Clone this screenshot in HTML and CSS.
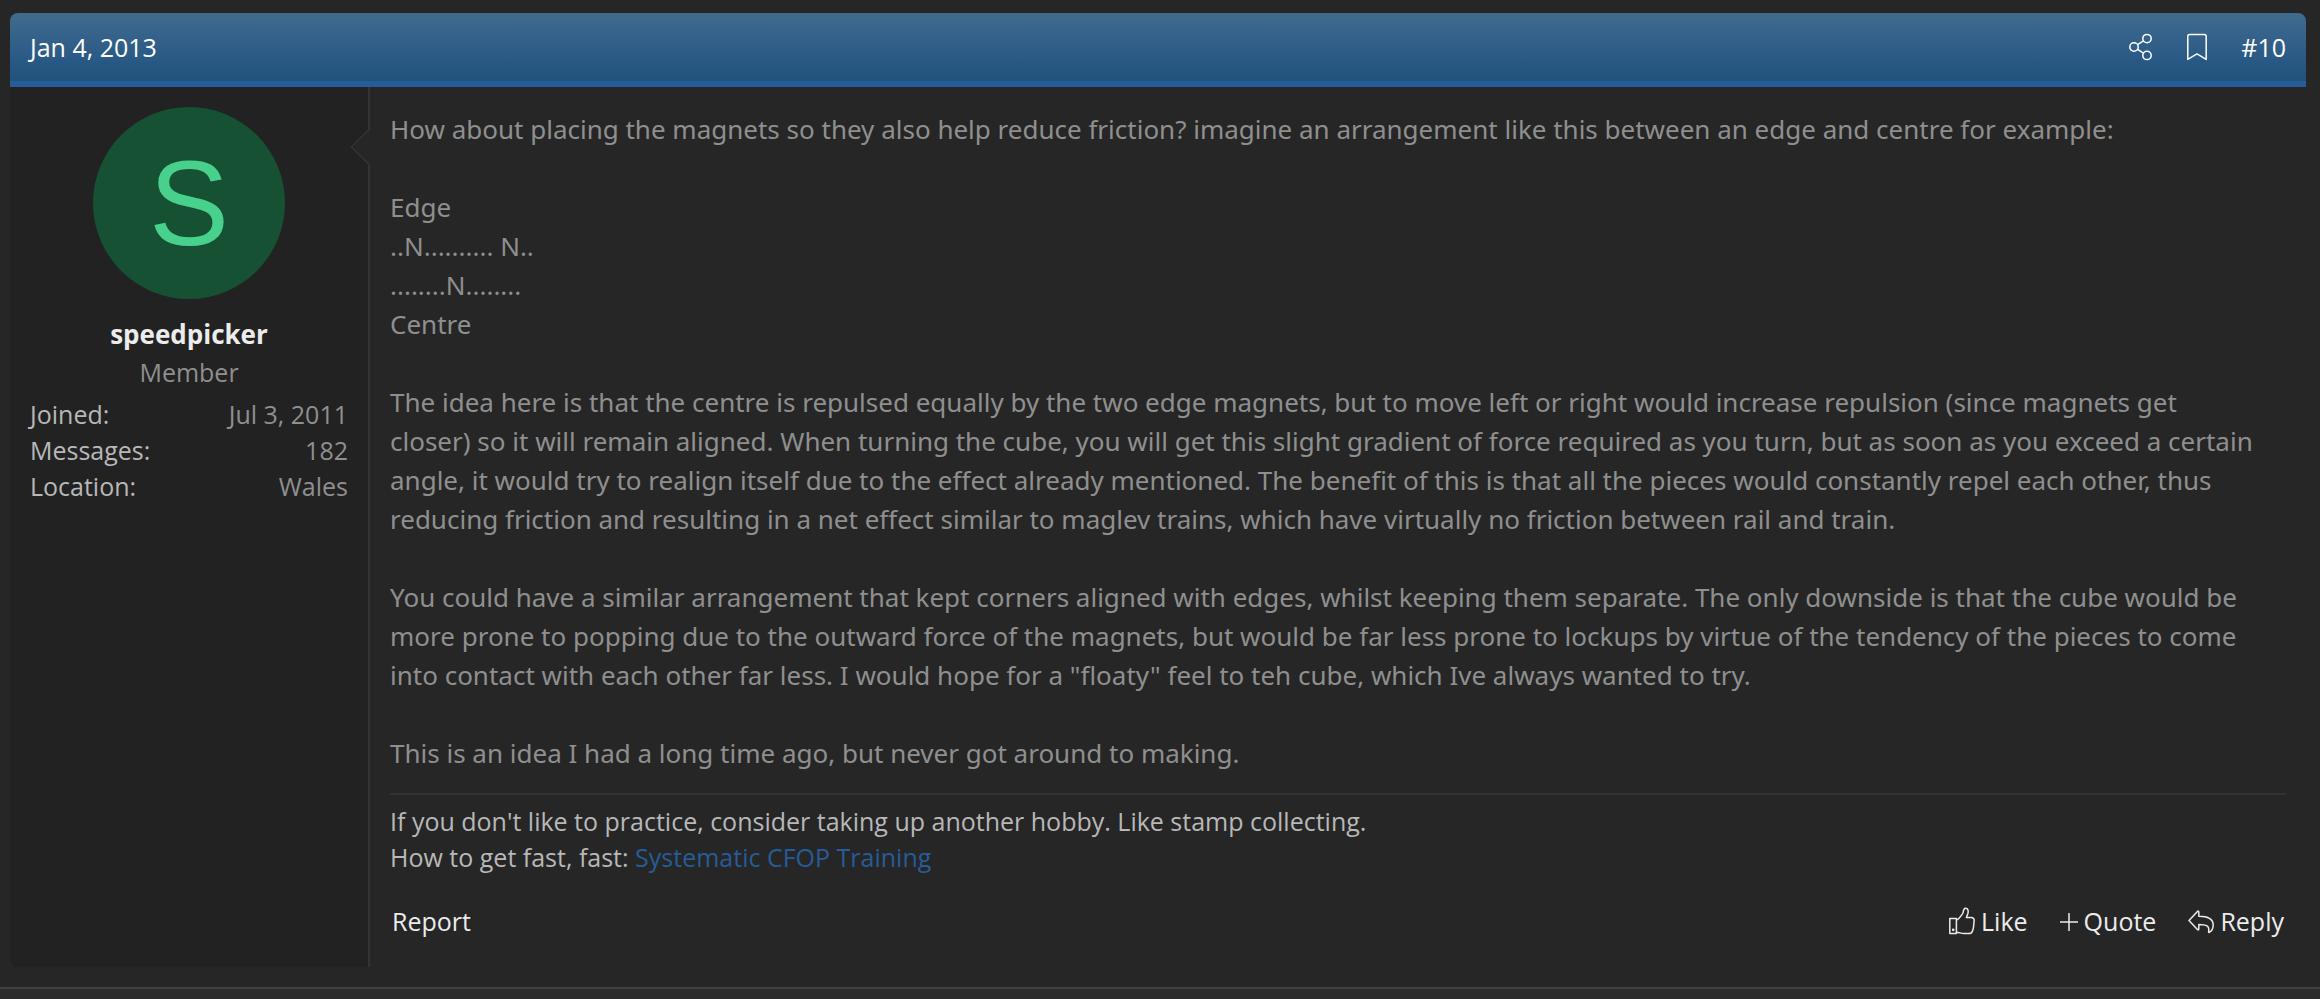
FILE: index.html
```html
<!DOCTYPE html>
<html lang="en">
<head>
<meta charset="utf-8">
<title>Thread – post #10</title>
<link rel="stylesheet" href="styles.css">
</head>
<body>
<main class="block">
  <article class="message">
    <header class="message-header">
      <a class="header-link" href="#post-10"><time datetime="2013-01-04">Jan 4, 2013</time></a>
      <div class="header-tools">
        <button class="icon-button" type="button" aria-label="Share">
          <svg class="icon icon-share" viewBox="0 0 24 28"><circle cx="5" cy="14" r="4.2"/><circle cx="18" cy="5.6" r="4.2"/><circle cx="18" cy="22.4" r="4.2"/><path d="M8.6 11.7l5.8-3.8M8.6 16.3l5.8 3.8"/></svg>
        </button>
        <button class="icon-button" type="button" aria-label="Add bookmark">
          <svg class="icon icon-bookmark" viewBox="0 0 20 28"><path d="M.8 26.4V3.4Q.8 1.6 2.6 1.6H17.4Q19.2 1.6 19.2 3.4V26.4L10 20.9Z"/></svg>
        </button>
        <a class="header-link" href="#post-10">#10</a>
      </div>
    </header>
    <div class="message-body">
      <section class="user">
        <a class="avatar" href="#speedpicker" aria-label="speedpicker's profile"><span>S</span></a>
        <h4 class="user-name"><a href="#speedpicker">speedpicker</a></h4>
        <h5 class="user-title">Member</h5>
        <dl class="user-stats">
          <div class="pair"><dt>Joined:</dt><dd>Jul 3, 2011</dd></div>
          <div class="pair"><dt>Messages:</dt><dd>182</dd></div>
          <div class="pair"><dt>Location:</dt><dd>Wales</dd></div>
        </dl>
        <svg class="pointer" viewBox="0 0 20 38"><path class="pointer-fill" d="M20 0L1 19L20 38Z"/><path class="pointer-line" d="M20 .6L1.4 19L20 37.4"/></svg>
      </section>
      <section class="content">
        <div class="text">How about placing the magnets so they also help reduce friction? imagine an arrangement like this between an edge and centre for example:<br>
<br>
Edge<br>
..N.......... N..<br>
........N........<br>
Centre<br>
<br>
The idea here is that the centre is repulsed equally by the two edge magnets, but to move left or right would increase repulsion (since magnets get<br>
closer) so it will remain aligned. When turning the cube, you will get this slight gradient of force required as you turn, but as soon as you exceed a certain<br>
angle, it would try to realign itself due to the effect already mentioned. The benefit of this is that all the pieces would constantly repel each other, thus<br>
reducing friction and resulting in a net effect similar to maglev trains, which have virtually no friction between rail and train.<br>
<br>
You could have a similar arrangement that kept corners aligned with edges, whilst keeping them separate. The only downside is that the cube would be more prone to popping due to the outward force of the magnets, but would be far less prone to lockups by virtue of the tendency of the pieces to come into contact with each other far less. I would hope for a "floaty" feel to teh cube, which Ive always wanted to try.<br>
<br>
This is an idea I had a long time ago, but never got around to making.</div>
        <aside class="signature">If you don't like to practice, consider taking up another hobby. Like stamp collecting.<br>
How to get fast, fast: <a href="#training">Systematic CFOP Training</a></aside>
        <footer class="actions">
          <a class="action" href="#report">Report</a>
          <div class="action-set">
            <a class="action" href="#like"><svg class="icon icon-like" viewBox="0 0 26 28"><path d="M.8 11.6H7.4V26.4H.8ZM7.4 13.2C10.2 12.4 11.4 9.4 13.6 6.6C14.8 5 14 1.4 16.4 1.2C19.2 1 19.6 4.4 18.8 6.8L17.4 10.6H22C24.6 10.6 25.6 12.4 25 14.4C24.8 17.6 24.8 21.4 23.4 24.2C22.8 26.2 21.6 26.6 19.4 26.6H15C12 26.6 10.2 25.2 7.4 25.2"/><circle cx="4.2" cy="22.8" r=".6"/></svg>Like</a>
            <a class="action" href="#quote"><svg class="icon icon-plus" viewBox="0 0 18 28"><path d="M0 15H18M9 6V24"/></svg>Quote</a>
            <a class="action" href="#reply"><svg class="icon icon-reply" viewBox="0 0 26 28"><path d="M1 13.4L9.4 4.4Q10.8 3.4 10.8 5.2V9.2C18 9.2 25.2 10.6 25.2 18C25.2 21.4 23.8 23.8 21.6 25.2Q20.4 25.8 20.6 24.4C21.8 19 18.4 17.4 10.8 17.4V21.8Q10.8 23.6 9.4 22.4Z"/></svg>Reply</a>
          </div>
        </footer>
      </section>
    </div>
  </article>
</main>
</body>
</html>
```
FILE: styles.css
```css
* {
  box-sizing: border-box;
}

body {
  margin: 0;
  min-height: 100vh;
  background: #2b2b2b;
  color: #b8b8b8;
  font-family: "Segoe UI", "Open Sans", "Noto Sans", sans-serif;
  font-size: 25px;
  line-height: 36px;
}

a {
  color: inherit;
  text-decoration: none;
}

.block {
  padding: 13px 14px 20px 10px;
  background: #262626;
  border-bottom: 2px solid #414141;
}

.message-header {
  display: flex;
  align-items: center;
  justify-content: space-between;
  padding: 16px 20px;
  color: #fff;
  background: linear-gradient(#416b8e, #2a5a86 65%, #20527b);
  border-bottom: 6px solid #265c98;
  border-radius: 8px 8px 0 0;
}

.header-tools {
  display: flex;
  align-items: center;
  gap: 34px;
}

.icon-button {
  display: flex;
  padding: 0;
  border: 0;
  background: none;
  color: inherit;
}

.icon {
  flex: none;
  height: 28px;
  fill: none;
  stroke: currentColor;
  stroke-width: 1.5;
  stroke-linejoin: round;
}

.icon-share {
  width: 24px;
}

.icon-bookmark {
  width: 20px;
}

.icon-plus {
  width: 18px;
}

.icon-like,
.icon-reply {
  width: 26px;
}

.message-body {
  display: flex;
}

.user {
  position: relative;
  flex: none;
  width: 360px;
  padding: 20px;
  background: #222;
  border-right: 2px solid #333;
  border-radius: 0 0 0 8px;
}

.avatar {
  display: flex;
  align-items: center;
  justify-content: center;
  width: 192px;
  height: 192px;
  margin: 0 auto;
  border-radius: 50%;
  background: #175133;
  color: #47d18c;
  font-family: "Liberation Sans", Arial, sans-serif;
  font-size: 120px;
}

.user-name {
  margin: 16px 0 0;
  color: #ececec;
  font-size: 26px;
  line-height: 39px;
  text-align: center;
}

.user-title {
  margin: 0;
  color: #8f8f8f;
  font-size: 25px;
  font-weight: 400;
  text-align: center;
}

.user-stats {
  margin: 6px 0 0;
}

.pair {
  display: flex;
  justify-content: space-between;
}

.pair dd {
  margin: 0;
  color: #8f8f8f;
}

.pointer {
  position: absolute;
  top: 41px;
  right: -2px;
  width: 20px;
  height: 38px;
}

.pointer-fill {
  fill: #262626;
}

.pointer-line {
  fill: none;
  stroke: #333;
  stroke-width: 1.5;
}

.content {
  flex: 1;
  min-width: 0;
  padding: 23px 20px 20px;
}

.text {
  color: #8f8f8f;
  font-family: "Segoe UI", "Noto Sans", "Open Sans", sans-serif;
  font-size: 26px;
  line-height: 39px;
}

.signature {
  margin-top: 20px;
  padding-top: 8px;
  border-top: 2px solid #333;
}

.signature a {
  color: #265c98;
}

.actions {
  display: flex;
  justify-content: space-between;
  padding: 28px 2px 8px;
  color: #ececec;
}

.action-set {
  display: flex;
  gap: 32px;
}

.action {
  display: flex;
  align-items: center;
  gap: 6px;
}
```
